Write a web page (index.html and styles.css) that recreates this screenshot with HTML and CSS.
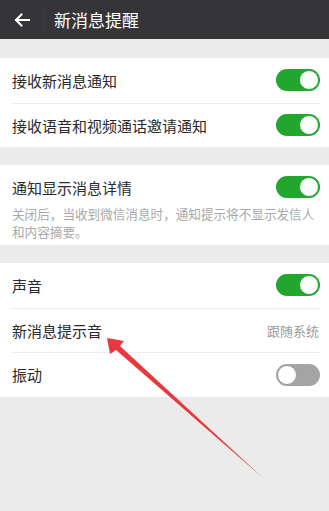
FILE: index.html
```html
<!DOCTYPE html>
<html lang="zh-CN">
<head>
<meta charset="utf-8">
<link rel="stylesheet" href="styles.css">
</head>
<body>
<div class="screen">
  <header class="topbar">
    <span class="back">
      <svg width="16" height="14" viewBox="0 0 16 14"><path d="M15 7H2M7.5 1.5L2 7l5.5 5.5" fill="none" stroke="#fff" stroke-width="2" stroke-linecap="square"/></svg>
    </span>
    <span class="sep"></span>
    <span class="title">新消息提醒</span>
  </header>

  <section class="group">
    <div class="row"><span class="label">接收新消息通知</span><span class="toggle on"></span></div>
    <div class="row"><span class="label">接收语音和视频通话邀请通知</span><span class="toggle on"></span></div>
  </section>

  <section class="group">
    <div class="row row-top"><span class="label">通知显示消息详情</span><span class="toggle on"></span></div>
    <p class="desc">关闭后，当收到微信消息时，通知提示将不显示发信人和内容摘要。</p>
  </section>

  <section class="group">
    <div class="row"><span class="label">声音</span><span class="toggle on"></span></div>
    <div class="row"><span class="label">新消息提示音</span><span class="value">跟随系统</span></div>
    <div class="row"><span class="label">振动</span><span class="toggle"></span></div>
  </section>

  <svg class="pointer" width="329" height="511" viewBox="0 0 329 511">
    <polygon points="107,338 124,341 120,346 263,478 116,350 110,354" fill="#e8383d"/>
  </svg>
</div>
</body>
</html>
```

FILE: styles.css
```css
html, body {
  margin: 0;
  padding: 0;
}
body {
  background: #ebebeb;
  font-family: "Noto Sans CJK SC", "Noto Sans", sans-serif;
}
.screen {
  position: relative;
  width: 329px;
  height: 511px;
  overflow: hidden;
  background: #ebebeb;
}
.topbar {
  height: 39px;
  background: #353538;
  display: flex;
  align-items: center;
  padding-left: 14px;
  box-sizing: border-box;
}
.back {
  display: flex;
  width: 16px;
  height: 14px;
}
.sep {
  width: 1px;
  height: 22px;
  background: #3d3d40;
  margin-left: 13px;
  margin-right: 10px;
}
.title {
  color: #ffffff;
  font-size: 17px;
  line-height: 20px;
}
.group {
  background: #ffffff;
  margin-top: 19px;
}
.group + .group {
  margin-top: 18px;
}
.row {
  height: 44.5px;
  display: flex;
  align-items: center;
  justify-content: space-between;
  margin: 0 9px 0 12px;
  border-top: 1px solid #ededed;
  box-sizing: border-box;
}
.row:first-child {
  border-top: none;
}
.row-top {
  height: 40px;
  padding-top: 4px;
}
.label {
  font-size: 15px;
  color: #2a2a2a;
}
.value {
  font-size: 13px;
  color: #9a9a9a;
  margin-right: 1px;
}
.desc {
  margin: 0;
  padding: 0 10px 4px 12px;
  font-size: 12.6px;
  line-height: 18px;
  color: #a8a8a8;
}
.toggle {
  position: relative;
  width: 44px;
  height: 22px;
  border-radius: 11px;
  background: #a4a4a4;
  flex: none;
}
.toggle::after {
  content: "";
  position: absolute;
  top: 1px;
  left: 1px;
  width: 18px;
  height: 18px;
  border-radius: 50%;
  background: #ffffff;
  border: 1px solid #9a9a9a;
}
.toggle.on {
  background: #22a62d;
}
.toggle.on::after {
  left: auto;
  right: 1px;
  border-color: #22a62d;
}
.pointer {
  position: absolute;
  left: 0;
  top: 0;
  pointer-events: none;
}
```
